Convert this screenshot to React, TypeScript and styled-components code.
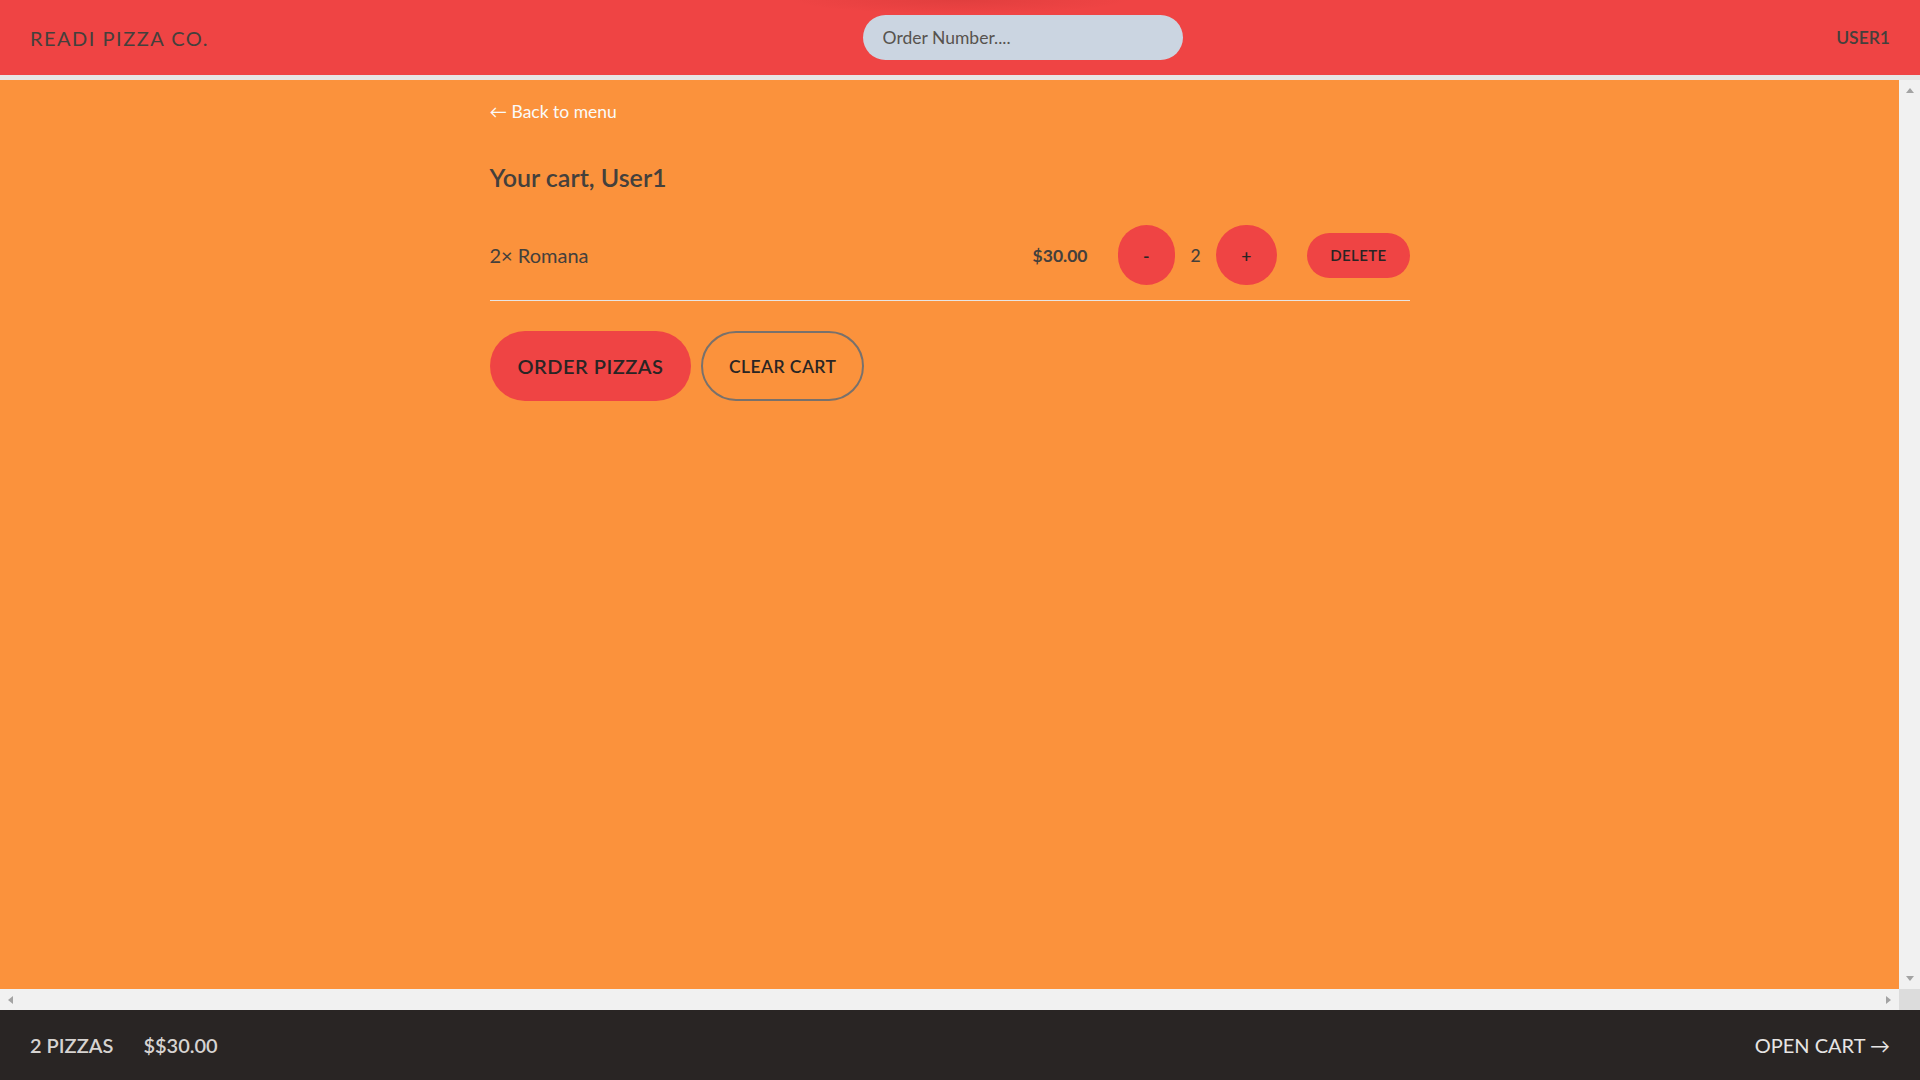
import styled, { createGlobalStyle } from "styled-components";

const GlobalStyle = createGlobalStyle`
html, body {
    margin: 0;
    padding: 0;
}
body {
    font-family: Lato, "Open Sans", sans-serif;
    color: #292524;
    font-size: 20px;
    line-height: 1.5;
}
*, *::before, *::after {
    box-sizing: border-box;
}
`;

const Layout = styled('div')`
display: grid;
grid-template-rows: auto 1fr auto;
height: 100vh;
`;

const Header = styled('header')`
display: flex;
align-items: center;
justify-content: space-between;
padding: 15px 30px;
background: radial-gradient(ellipse 170px 14px at 50% 0, rgba(120, 20, 20, 0.12), transparent), #ef4444;
border-bottom: 5px solid #e7e5e4;
text-transform: uppercase;
`;

const Logo = styled('a')`
font-size: 20px;
line-height: 30px;
letter-spacing: 1.5px;
color: #44403c;
text-decoration: none;
`;

const SearchInput = styled('input')`
width: 320px;
padding: 10px 20px;
border: none;
border-radius: 9999px;
background: #cbd5e1;
font-family: inherit;
font-size: 17.5px;
line-height: 25px;
color: #44403c;
outline: none;
&::placeholder {
    color: #57534e;
}
`;

const Username = styled('div')`
font-size: 17.5px;
line-height: 25px;
font-weight: 600;
color: #44403c;
`;

/* the scroll area, drawn with its classic scrollbars */
const ScrollArea = styled('div')`
display: grid;
grid-template-columns: 1fr 21px;
grid-template-rows: 1fr 21px;
min-height: 0;
overflow: hidden;
`;

const Viewport = styled('div')`
overflow: hidden;
background: #fb923c;
`;

const Track = styled('div')<{ $vertical?: boolean }>`
display: flex;
flex-direction: ${(p) => (p.$vertical ? "column" : "row")};
justify-content: space-between;
background: #f1f1f1;
`;

const Corner = styled('div')`
background: #dcdcdc;
`;

const ArrowButton = styled('div')`
display: flex;
align-items: center;
justify-content: center;
width: 21px;
height: 21px;
`;

type Dir = "up" | "down" | "left" | "right";

const Arrow = styled('span')<{ $dir: Dir }>`
width: 0;
height: 0;
border-style: solid;
border-color: transparent;
${(p) =>
    p.$dir === "up"
        ? "border-width: 0 4.5px 5px; border-bottom-color: #a3a3a3;"
        : p.$dir === "down"
        ? "border-width: 5px 4.5px 0; border-top-color: #a3a3a3;"
        : p.$dir === "left"
        ? "border-width: 4.5px 5px 4.5px 0; border-right-color: #a3a3a3;"
        : "border-width: 4.5px 0 4.5px 5px; border-left-color: #a3a3a3;"}
`;

const Main = styled('main')`
max-width: 960px;
margin: 0 auto;
padding: 15px 20px;
`;

const BackLink = styled('a')`
font-size: 17.5px;
line-height: 25px;
color: #fafaf9;
text-decoration: none;
`;

const Title = styled('h2')`
margin: 35px 0 0;
font-size: 25px;
line-height: 35px;
font-weight: 600;
color: #44403c;
`;

const ItemList = styled('ul')`
margin: 15px 0 0;
padding: 0;
list-style: none;
border-bottom: 1.25px solid #e7e5e4;
`;

const Item = styled('li')`
display: flex;
align-items: center;
justify-content: space-between;
padding: 15px 0;
`;

const ItemName = styled('p')`
margin: 0;
font-size: 20px;
line-height: 30px;
color: #44403c;
`;

const ItemControls = styled('div')`
display: flex;
align-items: center;
gap: 30px;
`;

const Price = styled('p')`
margin: 0;
font-size: 17.5px;
line-height: 25px;
font-weight: 700;
color: #44403c;
`;

const Quantity = styled('div')`
display: flex;
align-items: center;
gap: 15px;
font-size: 17.5px;
line-height: 25px;
font-weight: 500;
color: #44403c;
`;

type ButtonKind = "primary" | "secondary" | "round" | "small";

const paddings: Record<ButtonKind, string> = {
    primary: "20px 28px",
    secondary: "18.5px 25.5px",
    round: "17.5px 25.5px",
    small: "12.5px 23px",
};

const Button = styled('button')<{ $kind: ButtonKind }>`
display: inline-block;
padding: ${(p) => paddings[p.$kind]};
border: ${(p) => (p.$kind === "secondary" ? "2px solid #78716c" : "none")};
border-radius: 9999px;
background: ${(p) => (p.$kind === "secondary" ? "transparent" : "#ef4444")};
font-family: inherit;
font-size: ${(p) => (p.$kind === "primary" ? "20px" : p.$kind === "small" ? "15px" : "17.5px")};
line-height: ${(p) => (p.$kind === "primary" ? "30px" : p.$kind === "small" ? "20px" : "25px")};
font-weight: 600;
letter-spacing: 0.025em;
text-transform: uppercase;
color: #292524;
cursor: pointer;
`;

const Actions = styled('div')`
display: flex;
gap: 10px;
margin-top: 30px;
`;

const Footer = styled('footer')`
display: flex;
align-items: center;
justify-content: space-between;
padding: 20px 30px;
background: #292524;
color: #e7e5e4;
font-size: 20px;
line-height: 30px;
text-transform: uppercase;
`;

const Summary = styled('p')`
display: flex;
gap: 30px;
margin: 0;
font-weight: 600;
color: #d6d3d1;
`;

const CartLink = styled('a')`
color: #e7e5e4;
text-decoration: none;
`;

export default function App() {
    const username = "User1";
    return (
        <>
            <GlobalStyle />
            <Layout>
                <Header>
                    <Logo href="#">Readi Pizza Co.</Logo>
                    <form onSubmit={(e) => e.preventDefault()}>
                        <SearchInput placeholder="Order Number...." />
                    </form>
                    <Username>{username}</Username>
                </Header>
                <ScrollArea>
                    <Viewport>
                        <Main>
                            <BackLink href="#">&larr; Back to menu</BackLink>
                            <Title>Your cart, {username}</Title>
                            <ItemList>
                                <Item>
                                    <ItemName>2&times; Romana</ItemName>
                                    <ItemControls>
                                        <Price>$30.00</Price>
                                        <Quantity>
                                            <Button $kind="round">-</Button>
                                            <span>2</span>
                                            <Button $kind="round">+</Button>
                                        </Quantity>
                                        <Button $kind="small">Delete</Button>
                                    </ItemControls>
                                </Item>
                            </ItemList>
                            <Actions>
                                <Button $kind="primary">Order pizzas</Button>
                                <Button $kind="secondary">Clear cart</Button>
                            </Actions>
                        </Main>
                    </Viewport>
                    <Track $vertical>
                        <ArrowButton><Arrow $dir="up" /></ArrowButton>
                        <ArrowButton><Arrow $dir="down" /></ArrowButton>
                    </Track>
                    <Track>
                        <ArrowButton><Arrow $dir="left" /></ArrowButton>
                        <ArrowButton><Arrow $dir="right" /></ArrowButton>
                    </Track>
                    <Corner />
                </ScrollArea>
                <Footer>
                    <Summary>
                        <span>2 pizzas</span>
                        <span>$$30.00</span>
                    </Summary>
                    <CartLink href="#">Open cart &rarr;</CartLink>
                </Footer>
            </Layout>
        </>
    );
}
